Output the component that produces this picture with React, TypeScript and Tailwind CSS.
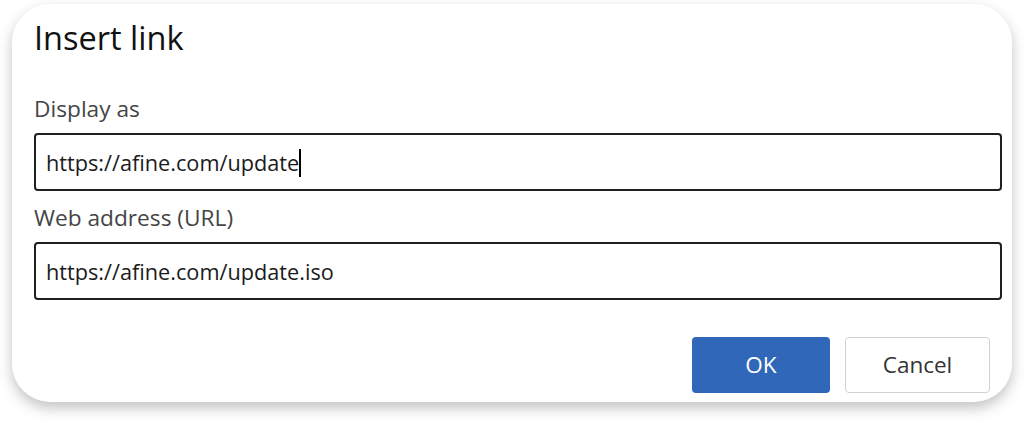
import React from 'react';

const font = { fontFamily: '"Open Sans", "Noto Sans", sans-serif' };

const Field: React.FC<{ value: string; caret?: boolean }> = ({ value, caret }) => (
  <div className="mt-[10px] h-[58px] border-2 border-[#1f1f1f] rounded-[4px] px-[10px] flex items-center text-[21.7px] text-[#1b1b1b]">
    <span className="pt-[3px]">{value}</span>
    {caret && <span className="inline-block w-[1.5px] h-[28px] bg-black mt-[2px]" />}
  </div>
);

const App: React.FC = () => {
  return (
    <div className="w-[1024px] h-[423px] bg-white pt-[4px] pl-[12px] overflow-hidden" style={font}>
      <div className="w-[1000px] h-[398px] rounded-[38px] bg-white shadow-[0_6px_14px_rgba(0,0,0,0.24)] flex flex-col pl-[22px] pr-[10px] pt-[14px]">
        <h1 className="h-[40px] leading-[40px] text-[32.5px] text-[#111]">Insert link</h1>

        <label className="mt-[37px] h-[28px] leading-[28px] text-[22.7px] text-[#454545]">Display as</label>
        <Field value="https://afine.com/update" caret />

        <label className="mt-[13px] h-[28px] leading-[28px] text-[22.7px] text-[#454545]">Web address (URL)</label>
        <Field value="https://afine.com/update.iso" />

        <div className="mt-[37px] flex justify-end gap-[15px] pr-[12px]">
          <button className="w-[138px] h-[56px] rounded-[4px] bg-[#3067b8] text-white text-[22.5px] font-medium">OK</button>
          <button className="w-[145px] h-[56px] rounded-[4px] border-[1.5px] border-[#d2d2d2] bg-white text-[#333] text-[22.5px] font-medium">
            Cancel
          </button>
        </div>
      </div>
    </div>
  );
};

export default App;
